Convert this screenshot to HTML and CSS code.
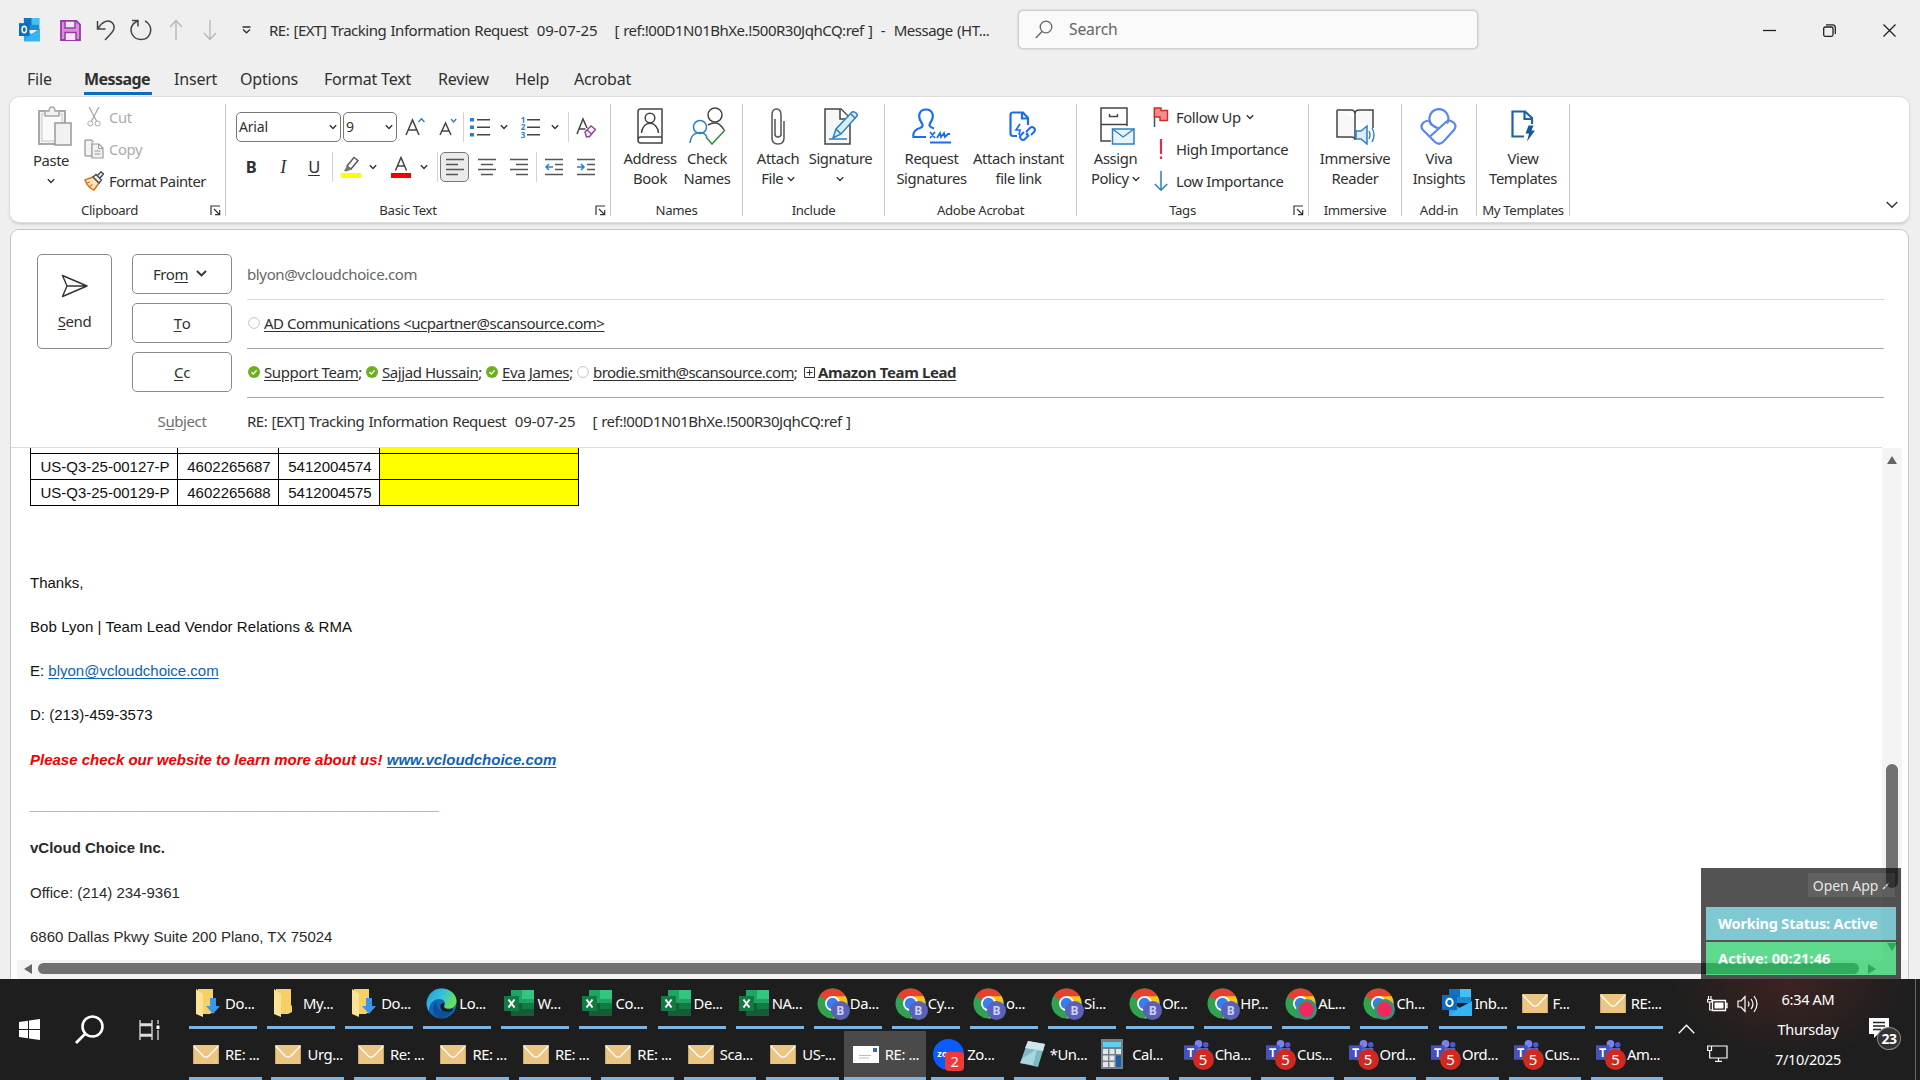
FILE: index.html
```html
<!DOCTYPE html>
<html lang="en">
<head>
<meta charset="utf-8">
<title>Message</title>
<link rel="stylesheet" href="styles.css">
</head>
<body>
<svg class="defs" width="0" height="0">
  <symbol id="chev" viewBox="0 0 8 6"><path d="M.8 1.2 4 4.4 7.200 1.200" fill="none" stroke="#333" stroke-width="1.4"/></symbol>
  <symbol id="launch" viewBox="0 0 11 11"><path d="M1 10V1h9M4 4l5.500 5.500M9.700 5v4.700H5" fill="none" stroke="#333" stroke-width="1.200"/></symbol>
  <symbol id="ok" viewBox="0 0 12 12"><circle cx="6" cy="6" r="6" fill="#6bb020"/><path d="M3.500 6.200 5.300 8 8.600 4.400" fill="none" stroke="#fff" stroke-width="1.300"/></symbol>
  <symbol id="unk" viewBox="0 0 12 12"><circle cx="6" cy="6" r="5.400" fill="#fff" stroke="#c2c6c6"/></symbol>
  <symbol id="mail" viewBox="0 0 27 20"><path d="M0 0h27v20H0z" fill="#ecc583"/><path d="M.5 1 10.500 11.500Q13.500 14 16.500 11.500L26.500 1" fill="none" stroke="#fff" stroke-width="1.400"/></symbol>
  <symbol id="folder" viewBox="0 0 26 28"><path d="M4 0h15v16l1 1v6l-4 2H4z" fill="#f6cf66"/><path d="M2 0 9 5v23L2 25z" fill="#ffe394"/></symbol>
  <symbol id="folderd" viewBox="0 0 26 28"><path d="M4 0h15v23l-3 2H4z" fill="#f6cf66"/><path d="M2 0 9 5v23L2 25z" fill="#ffe394"/><path d="M16 9h6v8h4l-7 8-7-8h4z" fill="#3a96e8"/></symbol>
  <symbol id="edge" viewBox="0 0 32 32"><defs><linearGradient id="eg" x1="0" y1="0" x2="1" y2=".5"><stop offset="0" stop-color="#2497dc"/><stop offset=".55" stop-color="#35c5d8"/><stop offset="1" stop-color="#6fe04f"/></linearGradient></defs><circle cx="16" cy="16" r="15.500" fill="#1267b8"/><path d="M1 13C3 5 9 .5 16 .5c9 0 15.500 6 15.500 13 0 5-4 8-8.500 8-4 0-5-2-4-3.500 1-1.500 1-6-4-6.500C8 11 3 16 3 24 .5 20 .3 16 1 13z" fill="url(#eg)"/><path d="M12 13c-3 8 4 14 15 11-4 6-10 8-15 6.500-6-3-7-13 0-17.500z" fill="#0c4f9a"/><path d="M19 17c-2 4 4 6 9 4l-1 3c-8 2-13-1-12-6 1-3 4-3 4-1z" fill="#1e1e1e"/></symbol>
  <symbol id="excel" viewBox="0 0 30 28"><path d="M7 1h23v26H7z" fill="#21a366"/><path d="M18 1h12v9H18z" fill="#33c481"/><path d="M7 14h11v13H7z" fill="#185c37"/><path d="M18 14h12v6H18z" fill="#107c41"/><path d="M18 20h12v7H18z" fill="#185c37"/><path d="M0 7h15v15H0z" fill="#107c41"/><path d="m4.500 10.500 6 8m0-8-6 8" stroke="#fff" stroke-width="2"/></symbol>
  <symbol id="chrome" viewBox="0 0 32 32"><circle cx="16" cy="16" r="15.500" fill="#31a350"/><path d="M16 16 2.600 8.200A15.500 15.500 0 0 1 29.400 8.200z" fill="#e8402f"/><path d="M16 8.500H29.600A15.500 15.500 0 0 1 16 31.500l6.500-11z" fill="#fbc116"/><circle cx="16" cy="16" r="7.700" fill="#fff"/><circle cx="16" cy="16" r="6" fill="#3a7df0"/></symbol>
  <symbol id="outlook" viewBox="0 0 30 28"><path d="M7 0h22v14H7z" fill="#1c8ad8"/><path d="M7 0h11v8H7z" fill="#1272c0"/><path d="M18 0h11v8H18z" fill="#43c1f5"/><path d="M7 12 18 19 30 12v15H7z" fill="#2aa5e8"/><path d="m7 27 12-9 11-5v14z" fill="#35b3f2"/><path d="M0 6h15v15H0z" fill="#0a6cc4"/><ellipse cx="7.500" cy="13.500" rx="3.200" ry="3.700" fill="none" stroke="#fff" stroke-width="2"/></symbol>
  <symbol id="teams" viewBox="0 0 32 30"><circle cx="16" cy="4.500" r="4" fill="#7b83eb"/><circle cx="23.500" cy="5.500" r="2.800" fill="#5059c9"/><path d="M9 9h17v12H9z" fill="#6a72dc"/><path d="M1 6h14v15H1z" fill="#4651bd"/><path d="M4.500 10h7M8 10v8" stroke="#fff" stroke-width="1.900"/></symbol>
</svg>

<header class="titlebar">
  <div class="quick">
    <svg class="q-out" width="21" height="24" viewBox="0 0 30 28" preserveAspectRatio="none"><use href="#outlook"/></svg>
    <svg class="q-save" width="21" height="21" viewBox="0 0 21 21"><path d="M1 1h15.500L20 4.500V20H1z" fill="#d78fdc" stroke="#9b3aa5" stroke-width="1.800"/><path d="M5 1h10v7H5zM5 20v-7.500h11V20" fill="#f3e6f4" stroke="#9b3aa5" stroke-width="1.500"/></svg>
    <svg class="q-undo" width="20" height="22" viewBox="0 0 20 22"><path d="M1.500 2v8h8M2 9.500C6 3 12-.5 16.500 4 20.500 9 17 13 9 21" fill="none" stroke="#444" stroke-width="1.500"/></svg>
    <svg class="q-redo" width="22" height="22" viewBox="0 0 22 22"><path d="M2 1.500h6v6M7.500 2C2 4.500-.5 9.500 2 15c4 7.500 15 7.500 18-.5C22 9 19.500 4 15 2" fill="none" stroke="#444" stroke-width="1.500"/></svg>
    <svg class="q-up" width="14" height="22" viewBox="0 0 14 22"><path d="M7 21V2M1 8l6-6.500L13 8" fill="none" stroke="#b8b8b8" stroke-width="1.400"/></svg>
    <svg class="q-down" width="14" height="22" viewBox="0 0 14 22"><path d="M7 1v19M1 14l6 6.500 6-6.500" fill="none" stroke="#b8b8b8" stroke-width="1.400"/></svg>
    <svg class="q-more" width="9" height="8" viewBox="0 0 9 8"><path d="M.5 1h8M1 3.500l3.500 3.300L8 3.500" fill="none" stroke="#333" stroke-width="1.300"/></svg>
  </div>
  <div class="title">RE: [EXT] Tracking Information Request  <span class="date">09-07-25</span>    [ ref:!00D1N01BhXe.!500R30JqhCQ:ref ]  -  Message (HT...</div>
  <div class="search">
    <svg width="18" height="19" viewBox="0 0 18 19"><circle cx="11" cy="7" r="5.800" fill="none" stroke="#666" stroke-width="1.300"/><path d="M7 11.500.8 18" stroke="#666" stroke-width="1.400"/></svg>
    <span>Search</span>
  </div>
  <div class="winbtns">
    <svg width="13" height="13" viewBox="0 0 13 13"><path d="M0 6.500h13" stroke="#222" stroke-width="1.300"/></svg>
    <svg width="13" height="13" viewBox="0 0 13 13"><rect x=".7" y="3" width="9.300" height="9.300" rx="1.500" fill="none" stroke="#222" stroke-width="1.300"/><path d="M3 .8h6.500Q12.300.8 12.300 3.500V10" fill="none" stroke="#222" stroke-width="1.300"/></svg>
    <svg width="13" height="13" viewBox="0 0 13 13"><path d="m.5.5 12 12m0-12-12 12" stroke="#222" stroke-width="1.300"/></svg>
  </div>
</header>

<nav class="tabs">
  <span class="t-file">File</span><span class="t-msg on">Message</span><span class="t-ins">Insert</span><span class="t-opt">Options</span><span class="t-fmt">Format Text</span><span class="t-rev">Review</span><span class="t-help">Help</span><span class="t-acro">Acrobat</span>
</nav>

<section class="ribbon">
  <div class="group g1">
    <div class="content">
      <div class="big paste">
        <i><svg width="36" height="40" viewBox="0 0 36 40"><path d="M2 5h26v33H2z" fill="#f1f1f1" stroke="#a8a8a8" stroke-width="2"/><path d="M5 8h20v27H5z" fill="#fafafa" stroke="#c9c9c9"/><path d="M8 10V5h4q0-4 3-4t3 4h4v5z" fill="#f1f1f1" stroke="#a8a8a8" stroke-width="1.500"/><path d="M18 17h16v22H18z" fill="#f1f1f1" stroke="#999" stroke-width="1.500"/></svg></i>
        <span>Paste<br><svg class="chev"><use href="#chev"/></svg></span>
      </div>
      <div class="rows">
        <div class="off"><i><svg width="14" height="20" viewBox="0 0 14 20"><path d="m2 0 7.500 14M12 0 4.500 14" stroke="#a8a8a8" stroke-width="1.300"/><circle cx="3.300" cy="16.500" r="2.500" fill="none" stroke="#a8a8a8"/><circle cx="10.700" cy="16.500" r="2.500" fill="none" stroke="#a8a8a8"/></svg></i>Cut</div>
        <div class="off"><i><svg width="20" height="20" viewBox="0 0 20 20"><path d="M7 17H1V1h7l2 2M1 1h7v16H1z" fill="#f3f3f3" stroke="#a8a8a8"/><path d="M8 5h7l4 4v10H8z" fill="#f3f3f3" stroke="#999" stroke-width="1.200"/><path d="M14.500 5v4.500H19M10.500 12h6M10.500 15h6" fill="none" stroke="#999"/></svg></i>Copy</div>
        <div class="fp"><i><svg width="20" height="20" viewBox="0 0 20 20"><path d="M1 9 9 6l6 6-5 7q-6-2-9-10z" fill="#fde3c4" stroke="#e0761c" stroke-width="1.600"/><path d="m3 12 3-1M5.500 15.500l3-2" stroke="#e0761c" stroke-width="1.300"/><path d="m9 6 3-2.500 5.500 5.500L15 12zM13.500 4.500 17 .8 19.500 3l-3.500 4" fill="#eee" stroke="#444" stroke-width="1.300"/></svg></i>Format Painter</div>
      </div>
    </div>
    <div class="label"><span>Clipboard</span><svg class="launch"><use href="#launch"/></svg></div>
  </div>

  <div class="group g2">
    <div class="content">
      <div class="frow">
        <div class="combo w104">Arial<svg class="chev"><use href="#chev"/></svg></div>
        <div class="combo w54">9<svg class="chev"><use href="#chev"/></svg></div>
        <i class="c36"><svg width="20" height="20" viewBox="0 0 20 20"><path d="M1 18 7.500 3 14 18M3.500 13h8" fill="none" stroke="#444" stroke-width="1.500"/><path d="m13.500 5 3-3.300 3 3.300" fill="none" stroke="#2b7fc4" stroke-width="1.400"/></svg></i>
        <i class="c30"><svg width="18" height="20" viewBox="0 0 18 20"><path d="M1 18 6.500 6 12 18M3 14h7" fill="none" stroke="#444" stroke-width="1.500"/><path d="m12 2 2.600 3 2.600-3" fill="none" stroke="#2b7fc4" stroke-width="1.400"/></svg></i>
        <b class="sep"></b>
        <i class="c32"><svg width="20" height="20" viewBox="0 0 20 20"><path d="M0 1h4v3.500H0zM0 8.500h4V12H0zM0 16h4v3.500H0z" fill="#2b7fc4"/><path d="M7 2.800h13M7 10.300h13M7 17.800h13" stroke="#444" stroke-width="1.500"/></svg></i>
        <i class="c16"><svg class="chev"><use href="#chev"/></svg></i>
        <i class="c38 nums"><em>1<br>2<br>3</em><svg width="14" height="20" viewBox="0 0 14 20"><path d="M0 2.800h13M0 10.300h13M0 17.800h13" stroke="#444" stroke-width="1.500"/></svg></i>
        <i class="c10"><svg class="chev"><use href="#chev"/></svg></i>
        <b class="sep ml8"></b>
        <i class="c34"><svg width="20" height="21" viewBox="0 0 20 21"><path d="M1 17 7 2l4 9M3.500 12h6" fill="none" stroke="#444" stroke-width="1.500"/><path d="m9 15 6-6 4.500 3.500-6 7-3 .5z" fill="#fff" stroke="#9b3aa5" stroke-width="1.500"/><path d="m11 13 4.500 4" stroke="#9b3aa5" stroke-width="1.500"/></svg></i>
      </div>
      <div class="frow">
        <i class="c30 fb">B</i><i class="c34 fi">I</i><i class="c28 fu">U</i>
        <b class="sep ml4"></b>
        <i class="c36"><svg width="20" height="22" viewBox="0 0 20 22"><path d="M6 10 13 1.500l4 3L10 13z" fill="#fff" stroke="#555" stroke-width="1.400"/><path d="m6 9.500-3 5.500 2 .5 6-2z" fill="#777"/><path d="M0 17h20v5H0z" fill="#fdfd00"/></svg></i>
        <i class="c8"><svg class="chev"><use href="#chev"/></svg></i>
        <i class="c30 ml9"><svg width="20" height="22" viewBox="0 0 20 22"><path d="M4.500 14.500 10 1.500l5.500 13M6.500 10h7" fill="none" stroke="#444" stroke-width="1.500"/><path d="M0 17h20v5H0z" fill="#f30000"/></svg></i>
        <i class="c16"><svg class="chev"><use href="#chev"/></svg></i>
        <b class="sep ml5"></b>
        <i class="c29 pressed"><svg width="18" height="18" viewBox="0 0 18 18"><path d="M0 1.500h18M0 6.500h12M0 11.500h18M0 16.500h12" stroke="#555" stroke-width="1.500"/></svg></i>
        <i class="c36"><svg width="18" height="18" viewBox="0 0 18 18"><path d="M0 1.500h18M3 6.500h12M0 11.500h18M3 16.500h12" stroke="#555" stroke-width="1.500"/></svg></i>
        <i class="c28"><svg width="18" height="18" viewBox="0 0 18 18"><path d="M0 1.500h18M6 6.500h12M0 11.500h18M6 16.500h12" stroke="#555" stroke-width="1.500"/></svg></i>
        <b class="sep ml3"></b>
        <i class="c33"><svg width="18" height="18" viewBox="0 0 18 18"><path d="M0 1.500h18M10 6.500h8M10 11.500h8M0 16.500h18" stroke="#555" stroke-width="1.500"/><path d="M8 9H1.500M4 6 1 9l3 3" fill="none" stroke="#2b7fc4" stroke-width="1.500"/></svg></i>
        <i class="c32"><svg width="18" height="18" viewBox="0 0 18 18"><path d="M0 1.500h18M10 6.500h8M10 11.500h8M0 16.500h18" stroke="#555" stroke-width="1.500"/><path d="M0 9h6.500M4 6l3 3-3 3" fill="none" stroke="#2b7fc4" stroke-width="1.500"/></svg></i>
      </div>
    </div>
    <div class="label"><span>Basic Text</span><svg class="launch"><use href="#launch"/></svg></div>
  </div>

  <div class="group g3">
    <div class="content">
      <div class="big w56"><i><svg width="26" height="36" viewBox="0 0 26 36"><path d="M3.500 1H25v34H3.500Q1 35 1 32V4Q1 1 3.500 1zM1 32q0-3 3-3h21" fill="none" stroke="#444" stroke-width="1.500"/><circle cx="13" cy="10" r="4.800" fill="none" stroke="#444" stroke-width="1.500"/><path d="M4.500 25c1-13 16-13 17 0" fill="none" stroke="#444" stroke-width="1.500"/></svg></i><span>Address<br>Book</span></div>
      <div class="big w58"><i><svg width="37" height="38" viewBox="0 0 37 38"><circle cx="26" cy="8" r="7" fill="none" stroke="#444" stroke-width="1.500"/><path d="M19 18q10-6 16 5" fill="none" stroke="#444" stroke-width="1.500"/><circle cx="11" cy="20" r="6.500" fill="none" stroke="#2b7fc4" stroke-width="1.500"/><path d="M1 36c1-12 13-13 17-6" fill="none" stroke="#2b7fc4" stroke-width="1.500"/><path d="m17 30 6 7L36 23" fill="none" stroke="#2c8c46" stroke-width="1.500"/></svg></i><span>Check<br>Names</span></div>
    </div>
    <div class="label"><span>Names</span></div>
  </div>

  <div class="group g4">
    <div class="content">
      <div class="big w60"><i><svg width="14" height="37" viewBox="0 0 14 37"><path d="M10 8v18q0 3-3 3t-3-3V11M13 13v17q0 6-6 6t-6-6V7q0-6 4.500-6T10 7v3" fill="none" stroke="#555" stroke-width="1.500"/></svg></i><span>Attach<br>File <svg class="chev"><use href="#chev"/></svg></span></div>
      <div class="big w65"><i><svg width="34" height="37" viewBox="0 0 34 37"><path d="M1 1h16l9 9v26H1z" fill="#f7f7f7" stroke="#444" stroke-width="1.500"/><path d="M16 1v10h10" fill="#fff" stroke="#444" stroke-width="1.500"/><path d="m9 30 3-9L28 4q2-1 4 1t1 3L17 26z" fill="#d9edfb" stroke="#2b7fc4" stroke-width="1.500"/><path d="m12 21 5 5M27 6l4.500 4.500M5 31h18" stroke="#2b7fc4" stroke-width="1.500"/></svg></i><span>Signature<br><svg class="chev"><use href="#chev"/></svg></span></div>
    </div>
    <div class="label"><span>Include</span></div>
  </div>

  <div class="group g5">
    <div class="content">
      <div class="big w83"><i><svg width="39" height="36" viewBox="0 0 39 36"><path d="M14 29H1.500c-1-5 3-8 6.500-9 3-1 3-3 2-4.500C5 9 7 1.500 14 1.500S23 9 18 15.500c-1 2-1 3 4 5" fill="none" stroke="#1a6fe8" stroke-width="2.200"/><path d="m18 24 5 6m0-6-5 6M25 30l3-5 1 4 3-4 1 4 3-3h2M18 34.500h21" fill="none" stroke="#1a6fe8" stroke-width="1.800"/></svg></i><span>Request<br>Signatures</span></div>
      <div class="big w91 inst"><i><svg width="27" height="31" viewBox="0 0 27 31"><path d="M8 25H4Q1.500 25 1.500 22V4Q1.500 1.500 4 1.500h10L19 7v7M13 1.500V7.500h6" fill="none" stroke="#1a6fe8" stroke-width="2.200"/><path d="m11 13-4 6h4l-1 5" fill="none" stroke="#1a6fe8" stroke-width="1.700"/><path d="m17 21 4-4q2-2 4 0t0 4l-3 3M19 22l-2 2M20 24l-4 4q-2 2-4 0t0-4l3-3" fill="none" stroke="#1a6fe8" stroke-width="2"/></svg></i><span>Attach instant<br>file link</span></div>
    </div>
    <div class="label"><span>Adobe Acrobat</span></div>
  </div>

  <div class="group g6">
    <div class="content">
      <div class="big w63 assign"><i><svg width="35" height="38" viewBox="0 0 35 38"><path d="M11 34H1V1h26v18M1 17.500h26" fill="none" stroke="#444" stroke-width="1.500"/><path d="M9.500 7v2.500h8V7" fill="none" stroke="#444" stroke-width="1.400"/><path d="M12.500 22H34v15H12.500z" fill="#e8f4fc" stroke="#2b7fc4" stroke-width="1.500"/><path d="m12.500 22 10.700 8L34 22" fill="none" stroke="#2b7fc4" stroke-width="1.400"/></svg></i><span>Assign<br>Policy <svg class="chev"><use href="#chev"/></svg></span></div>
      <div class="rows">
        <div><i><svg width="16" height="20" viewBox="0 0 16 20"><path d="M1.500 1v19" stroke="#39566b" stroke-width="1.500"/><path d="M1.500 1H8v2.500h6.500v10H7V10H1.500z" fill="#f58c8c" stroke="#cf2a2a" stroke-width="1.400"/></svg></i>Follow Up <svg class="chev fl"><use href="#chev"/></svg></div>
        <div><i><svg width="4" height="20" viewBox="0 0 4 20"><path d="M2 0v15M2 17.500V20" stroke="#d9304c" stroke-width="2.200"/></svg></i>High Importance</div>
        <div><i><svg width="14" height="20" viewBox="0 0 14 20"><path d="M7 0v19M.8 13 7 19.200 13.200 13" fill="none" stroke="#2b7fc4" stroke-width="1.500"/></svg></i>Low Importance</div>
      </div>
    </div>
    <div class="label"><span>Tags</span><svg class="launch"><use href="#launch"/></svg></div>
  </div>

  <div class="group g7">
    <div class="content mid">
      <div class="big"><i><svg width="39" height="37" viewBox="0 0 39 37"><path d="M1 2h14q4 0 4 4 0-4 4-4h14v18M1 2v27h14q4 0 4 3V6" fill="#f8f8f8" stroke="#444" stroke-width="1.500"/><path d="M20 23h5l6-5v18l-6-5h-5z" fill="#dcedfa" stroke="#2b7fc4" stroke-width="1.500"/><path d="M33 23q2 4 0 8M36 20q4 7 0 14" fill="none" stroke="#2b7fc4" stroke-width="1.400"/></svg></i><span>Immersive<br>Reader</span></div>
    </div>
    <div class="label"><span>Immersive</span></div>
  </div>
  <div class="group g8">
    <div class="content mid">
      <div class="big"><i><svg width="37" height="37" viewBox="0 0 37 37"><g fill="none" stroke="#5a86f2" stroke-width="2.200"><path d="M11.500 16.500A9.500 9.500 0 1 1 27 15.500"/><path d="M10 13q-4-1-7 2-3 4 0 7l12 12q4 3.500 8 0l11-12q3-4 0-7-4-4-8-1L10 28.500M9.500 13Q10 17 18.500 20.500"/></g></svg></i><span>Viva<br>Insights</span></div>
    </div>
    <div class="label"><span>Add-in</span></div>
  </div>
  <div class="group g9">
    <div class="content mid">
      <div class="big"><i><svg width="24" height="32" viewBox="0 0 24 32"><path d="M13 26.500H1.500v-25H14L21 8v6M13.500 1.500V9H21" fill="none" stroke="#1c64a8" stroke-width="2.200"/><path d="M17.500 15.500h5l-2 5H24l-8 11 2-8h-3.500z" fill="#15599c"/></svg></i><span>View<br>Templates</span></div>
    </div>
    <div class="label"><span>My Templates</span></div>
  </div>
  <svg class="collapse" width="12" height="8" viewBox="0 0 12 8"><path d="m.7 1 5.300 5.300L11.300 1" fill="none" stroke="#333" stroke-width="1.400"/></svg>
</section>

<main class="pane">
  <div class="head">
    <div class="send"><svg width="27" height="24" viewBox="0 0 27 24"><path d="M1.500 1.500 26 12 1.500 22.500 6 12zM6 12h19" fill="none" stroke="#333" stroke-width="1.400" stroke-linejoin="round"/></svg><span><u>S</u>end</span></div>
    <div class="fields">
      <div class="fld"><div class="btn from">Fro<u>m</u><svg width="11" height="7" viewBox="0 0 11 7"><path d="m1 1 4.500 4.500L10 1" fill="none" stroke="#333" stroke-width="1.800"/></svg></div><div class="val lite grey">blyon@vcloudchoice.com</div></div>
      <div class="fld"><div class="btn"><u>T</u>o</div><div class="val"><svg class="pr"><use href="#unk"/></svg><u class="n-ad">AD Communications &lt;ucpartner@scansource.com&gt;</u></div></div>
      <div class="fld"><div class="btn"><u>C</u>c</div><div class="val">
        <div class="who p1"><svg class="pr"><use href="#ok"/></svg><u>Support Team</u>;</div>
        <div class="who p2"><svg class="pr"><use href="#ok"/></svg><u>Sajjad Hussain</u>;</div>
        <div class="who p3"><svg class="pr"><use href="#ok"/></svg><u>Eva James</u>;</div>
        <div class="who p4"><svg class="pr"><use href="#unk"/></svg><u>brodie.smith@scansource.com</u>;</div>
        <div class="who p5"><svg width="11" height="11" viewBox="0 0 11 11"><path d="M.5.5h10v10H.5zM2.500 5.500h6M5.500 2.500v6" fill="none" stroke="#333"/></svg><u>Amazon Team Lead</u></div>
      </div></div>
      <div class="fld last"><div class="cap">S<u>u</u>bject</div><div class="val subj">RE: [EXT] Tracking Information Request  <span class="date">09-07-25</span>    [ ref:!00D1N01BhXe.!500R30JqhCQ:ref ]</div></div>
    </div>
  </div>
  <div class="body">
    <div class="doc">
      <table>
        <tr><td class="k1"></td><td class="k2"></td><td class="k2"></td><td class="k3"></td></tr>
        <tr><td>US-Q3-25-00127-P</td><td>4602265687</td><td>5412004574</td><td class="k3"></td></tr>
        <tr><td>US-Q3-25-00129-P</td><td>4602265688</td><td>5412004575</td><td class="k3"></td></tr>
      </table>
      <p>Thanks,</p>
      <p class="sig">Bob Lyon | Team Lead Vendor Relations &amp; RMA</p>
      <p>E: <a>blyon@vcloudchoice.com</a></p>
      <p>D: (213)-459-3573</p>
      <p class="promo">Please check our website to learn more about us! <a>www.vcloudchoice.com</a></p>
      <p class="rule">_________________________________________________</p>
      <p class="dim"><b>vCloud Choice Inc.</b></p>
      <p class="dim">Office: (214) 234-9361</p>
      <p class="dim">6860 Dallas Pkwy Suite 200 Plano, TX 75024</p>
    </div>
    <div class="vbar">
      <svg width="10" height="8" viewBox="0 0 10 8"><path d="M5 0 10 8H0z" fill="#666"/></svg>
      <div class="vthumb"></div>
      <svg width="10" height="8" viewBox="0 0 10 8"><path d="M5 8 10 0H0z" fill="#666"/></svg>
    </div>
  </div>
  <div class="hbar">
    <svg width="8" height="10" viewBox="0 0 8 10"><path d="M0 5 8 0v10z" fill="#666"/></svg>
    <div class="hthumb"></div>
    <svg width="8" height="10" viewBox="0 0 8 10"><path d="M8 5 0 0v10z" fill="#666"/></svg>
  </div>
</main>

<aside class="widget">
  <div class="open">Open App <svg width="8" height="8" viewBox="0 0 8 8"><path d="M1 7 7 1" stroke="#ddd" stroke-width="1.500" stroke-dasharray="3 1"/></svg></div>
  <div class="ws">Working Status: Active</div>
  <div class="ac">Active: 00:21:46</div>
</aside>

<footer class="taskbar">
  <div class="sys">
    <svg width="21" height="21" viewBox="0 0 21 21"><path d="M0 3 9 1.700v8.300H0zM10 1.500 21 0v10H10zM0 11h9v8.300L0 18zM10 11h11v10l-11-1.500z" fill="#fff"/></svg>
    <svg width="29" height="29" viewBox="0 0 29 29"><circle cx="17.500" cy="11.500" r="10" fill="none" stroke="#fff" stroke-width="2.600"/><path d="M10.500 18.500 1 28" stroke="#fff" stroke-width="2.800"/></svg>
    <svg width="21" height="20" viewBox="0 0 21 20"><path d="M1 0v4h12V0M1 20v-4h12v4M1 5.500h12v9H1zM19 0v4M19 10v10" fill="none" stroke="#ddd" stroke-width="1.300"/><path d="M17.500 5.500h3v3.500h-3z" fill="#fff"/></svg>
  </div>
  <div class="tasks">
    <div class="trow r1">
      <div><i><svg width="26" height="28"><use href="#folderd"/></svg></i>Do...</div>
      <div><i><svg width="26" height="28"><use href="#folder"/></svg></i>My...</div>
      <div><i><svg width="26" height="28"><use href="#folderd"/></svg></i>Do...</div>
      <div><i><svg width="31" height="31"><use href="#edge"/></svg></i>Lo...</div>
      <div><i><svg width="30" height="28"><use href="#excel"/></svg></i>W...</div>
      <div><i><svg width="30" height="28"><use href="#excel"/></svg></i>Co...</div>
      <div><i><svg width="30" height="28"><use href="#excel"/></svg></i>De...</div>
      <div><i><svg width="30" height="28"><use href="#excel"/></svg></i>NA...</div>
      <div><i><svg width="31" height="31"><use href="#chrome"/></svg><b class="pb">B</b></i>Da...</div>
      <div><i><svg width="31" height="31"><use href="#chrome"/></svg><b class="pb">B</b></i>Cy...</div>
      <div><i><svg width="31" height="31"><use href="#chrome"/></svg><b class="pb">B</b></i>o...</div>
      <div><i><svg width="31" height="31"><use href="#chrome"/></svg><b class="pb">B</b></i>Si...</div>
      <div><i><svg width="31" height="31"><use href="#chrome"/></svg><b class="pb">B</b></i>Or...</div>
      <div><i><svg width="31" height="31"><use href="#chrome"/></svg><b class="pb">B</b></i>HP...</div>
      <div><i><svg width="31" height="31"><use href="#chrome"/></svg><b class="pr2"></b></i>AL...</div>
      <div><i><svg width="31" height="31"><use href="#chrome"/></svg><b class="pr2"></b></i>Ch...</div>
      <div><i><svg width="30" height="28"><use href="#outlook"/></svg></i>Inb...</div>
      <div><i><svg width="26" height="19"><use href="#mail"/></svg></i>F...</div>
      <div><i><svg width="26" height="19"><use href="#mail"/></svg></i>RE:...</div>
    </div>
    <div class="trow r2">
      <div><i><svg width="26" height="19"><use href="#mail"/></svg></i>RE: ...</div>
      <div><i><svg width="26" height="19"><use href="#mail"/></svg></i>Urg...</div>
      <div><i><svg width="26" height="19"><use href="#mail"/></svg></i>Re: ...</div>
      <div><i><svg width="26" height="19"><use href="#mail"/></svg></i>RE: ...</div>
      <div><i><svg width="26" height="19"><use href="#mail"/></svg></i>RE: ...</div>
      <div><i><svg width="26" height="19"><use href="#mail"/></svg></i>RE: ...</div>
      <div><i><svg width="26" height="19"><use href="#mail"/></svg></i>Sca...</div>
      <div><i><svg width="26" height="19"><use href="#mail"/></svg></i>US-...</div>
      <div class="cur"><i><svg width="26" height="17" viewBox="0 0 26 17"><path d="M0 0h26v17H0z" fill="#fff"/><path d="M20 2h4v4h-4z" fill="#3767b5"/><path d="M6 9.500h12M6 12h10" stroke="#bbb"/></svg></i>RE: ...</div>
      <div class="zoom"><i><svg width="31" height="31" viewBox="0 0 31 31"><circle cx="15.500" cy="15.500" r="15.500" fill="#0b5cff"/></svg><b class="zt">zo</b><b class="zb">2</b></i>Zo...</div>
      <div><i><svg width="28" height="28" viewBox="0 0 28 28"><path d="M10 1 27 4 20 27 2 23z" fill="#7fb9c4"/><path d="M10 1 27 4l-2 7L7 8z" fill="#cfe6ea"/><path d="M5 18 19 9l-4 16L2 23z" fill="#a9d6dc"/></svg></i>*Un...</div>
      <div><i><svg width="24" height="30" viewBox="0 0 24 30"><path d="M1 0h22v30H1z" fill="#76808a"/><path d="M3 3h18v5H3z" fill="#5fd0f4"/><path d="M3 10h5v5H3zM9.500 10h5v5h-5zM16 10h5v5h-5zM3 16.500h5v5H3zM9.500 16.500h5v5h-5zM3 23h5v5H3zM9.500 23h5v5h-5z" fill="#e4e7ea"/><path d="M16 16.500h5V28h-5z" fill="#1e5fa8"/></svg></i>Cal...</div>
      <div><i><svg width="31" height="30"><use href="#teams"/></svg><b class="tb">5</b></i>Cha...</div>
      <div><i><svg width="31" height="30"><use href="#teams"/></svg><b class="tb">5</b></i>Cus...</div>
      <div><i><svg width="31" height="30"><use href="#teams"/></svg><b class="tb">5</b></i>Ord...</div>
      <div><i><svg width="31" height="30"><use href="#teams"/></svg><b class="tb">5</b></i>Ord...</div>
      <div><i><svg width="31" height="30"><use href="#teams"/></svg><b class="tb">5</b></i>Cus...</div>
      <div><i><svg width="31" height="30"><use href="#teams"/></svg><b class="tb">5</b></i>Am...</div>
    </div>
  </div>
  <svg class="more" width="17" height="10" viewBox="0 0 17 10"><path d="m.8 9.200 7.700-8 7.700 8" fill="none" stroke="#fff" stroke-width="1.400"/></svg>
  <div class="tray">
    <div>
      <svg width="21" height="16" viewBox="0 0 21 16"><path d="M5.500 4.500h13v10h-13zM18.500 7.500h1.500v4h-1.500" fill="none" stroke="#fff" stroke-width="1.300"/><path d="M7.500 6.500h9v6h-9z" fill="#fff"/><path d="M1.500 0v3M4 0v3M.5 3.500h4.500V6H.5zM2.700 6v8h3" fill="none" stroke="#fff" stroke-width="1.200"/></svg>
      <svg width="21" height="20" viewBox="0 0 21 20"><path d="M1 7h3l4-4.500v15L4 13H1zM11 7.500q2 2.500 0 5M14 5q4 5 0 10M17 2q6 8 0 16" fill="none" stroke="#fff" stroke-width="1.200"/></svg>
    </div>
    <svg width="21" height="17" viewBox="0 0 21 17"><path d="M5 1h15v12H2.700V6M8 16.300h7M11.500 13v3M.7 1H4.500v4.500H.7z" fill="none" stroke="#fff" stroke-width="1.200"/></svg>
  </div>
  <div class="clock">6:34 AM<br>Thursday<br>7/10/2025</div>
  <div class="note"><svg width="20" height="20" viewBox="0 0 20 20"><path d="M0 0h20v16H9l-4 4v-4H0z" fill="#fff"/><path d="M4 4.500h12M4 8h12M4 11.500h8" stroke="#222" stroke-width="1.400"/></svg><b>23</b></div>
  <div class="peek"></div>
</footer>
</body>
</html>
```
FILE: styles.css
```css
* { box-sizing: border-box; }
body {
  margin: 0; width: 1920px; height: 1080px; overflow: hidden; position: relative;
  display: flex; flex-direction: column; background: #efefef; color: #303030;
  font: 14.8px/20px "Noto Sans", "Open Sans", sans-serif; letter-spacing: -.4px;
}
.defs { position: absolute; }
i, em { font-style: normal; }
svg { flex: none; display: block; }
.chev { width: 8px; height: 6px; display: inline-block; vertical-align: 2px; }
.launch { width: 11px; height: 11px; }

/* title bar */
.titlebar { height: 60px; display: flex; align-items: center; flex: none; }
.quick { width: 269px; display: flex; align-items: center; flex: none; padding-left: 19px; }
.q-save { margin-left: 20px; }
.q-undo { margin-left: 15px; }
.q-redo { margin-left: 14px; }
.q-up { margin-left: 17px; }
.q-down { margin-left: 20px; }
.q-more { margin-left: 25px; }
.title { width: 749px; white-space: pre; font-size: 15px; letter-spacing: -.48px; word-spacing: .8px; }
.date { letter-spacing: -.03px; }
.search {
  width: 460px; height: 39px; margin-top: -1px; padding: 0 0 1px 16px; display: flex; align-items: center; gap: 16px;
  background: #fafafa; border: 1px solid #cfcfcf; border-radius: 5px; color: #666; box-shadow: 0 0 2px #bbb;
  font-size: 15.700px; letter-spacing: -.2px;
}
.winbtns { flex: 1; display: flex; gap: 47px; padding-left: 285px; }

/* tabs */
.tabs { height: 37px; flex: none; display: flex; font-size: 16px; line-height: 39px; padding-left: 27px; letter-spacing: -.2px; }
.tabs span { height: 35px; white-space: nowrap; }
.t-file { width: 57px; }
.t-msg { width: 68px; margin-right: 22px; }
.t-ins { width: 66px; }
.t-opt { width: 84px; }
.t-fmt { width: 114px; }
.t-rev { width: 77px; }
.t-help { width: 59px; }
.tabs .on { font-weight: 700; border-bottom: 3px solid #0f6cbd; letter-spacing: -.55px; }

/* ribbon */
.ribbon {
  height: 125px; flex: none; margin: 0 11px 7px 10px; padding-top: 7px; display: flex; background: #fff;
  border-radius: 9px; box-shadow: 0 0 0 1px #dcdcdc, 0 2px 3px #c4c4c4;
}
.group { height: 112px; border-right: 1px solid #c9c9c9; display: flex; flex-direction: column; }
.content { height: 100px; display: flex; }
.mid { justify-content: center; }
.label { height: 12px; line-height: 14px; display: flex; align-items: center; font-size: 13.2px; letter-spacing: -.35px; white-space: nowrap; }
.label span { flex: 1; text-align: center; }
.label .launch { margin-right: 4px; margin-left: 5px; }
.g1 { width: 216px; } .g1 .content { padding-left: 11px; }
.g1 .label { padding-left: 4px; }
.g2 { width: 385px; } .g2 .content { padding: 8px 0 0 10px; flex-direction: column; gap: 10px; justify-content: flex-start; }
.g3 { width: 132px; } .g3 .content { padding-left: 11px; }
.g4 { width: 142px; } .g4 .content { padding-left: 5px; }
.g5 { width: 192px; } .g5 .content { padding-left: 5px; }
.g6 { width: 232px; } .g6 .content { padding-left: 7px; }
.g7 { width: 93px; }
.g8 { width: 75px; }
.g9 { width: 93px; }
.big { display: flex; flex-direction: column; align-items: center; text-align: center; white-space: nowrap; }
.big i { height: 44px; display: flex; align-items: center; }
.paste { width: 63px; padding-right: 3px; }
.paste i { padding-left: 7px; }
.paste span { padding-top: 2px; }
.inst i { padding-left: 7px; }
.assign i { padding-left: 4px; }
.w56 { width: 56px; } .w58 { width: 58px; } .w60 { width: 60px; } .w65 { width: 65px; }
.w83 { width: 83px; } .w91 { width: 91px; } .w63 { width: 63px; }
.rows { margin-top: -3px; line-height: 32px; white-space: nowrap; }
.rows div { height: 32px; display: flex; align-items: center; }
.rows i { width: 20px; margin-right: 5px; display: flex; justify-content: center; }
.g6 .rows { padding-left: 3px; }
.g6 .rows i { width: 22px; margin-right: 4px; }
.fp { letter-spacing: -.52px; }
.fl { margin-left: 5px; }
.off { color: #ababab; }
.frow { height: 30px; display: flex; }
.frow i { display: flex; align-items: center; justify-content: center; flex: none; }
.combo { height: 30px; border: 1px solid #777; border-radius: 5px; padding: 0 3px 0 2px; display: flex; align-items: center; justify-content: space-between; font-size: 14px; letter-spacing: -.2px; }
.w104 { width: 105px; margin-right: 2px; } .w54 { width: 54px; }
.sep { width: 1px; height: 30px; background: #d2d2d2; flex: none; }
.c8 { width: 8px; } .c10 { width: 10px; } .c16 { width: 16px; } .c28 { width: 28px; } .c29 { width: 29px; }
.c30 { width: 30px; } .c32 { width: 32px; } .c33 { width: 33px; } .c34 { width: 34px; } .c36 { width: 36px; } .c38 { width: 38px; }
.ml3 { margin-left: 3px; } .ml4 { margin-left: 4px; } .ml5 { margin-left: 5px; } .ml8 { margin-left: 8px; } .ml9 { margin-left: 9px; }
.nums em { font-size: 8px; line-height: 7.500px; font-weight: 700; color: #2b7fc4; margin-right: 2px; letter-spacing: 0; }
.fb { font-weight: 700; font-size: 16.500px; }
.frow .fi { font: italic 18px "Liberation Serif", serif; }
.fu { font-size: 16.500px; text-decoration: underline; text-underline-offset: 2px; }
.pressed { border: 1px solid #777; border-radius: 5px; background: #ebebeb; margin-left: 2px; }
.collapse { margin: 97px 11px 0 auto; }

/* message pane */
.pane { flex: 1; min-height: 0; margin: 0 11px 0 10px; background: #fff; border: 1px solid #c6c6c6; border-bottom: 0; border-radius: 9px 9px 0 0; display: flex; flex-direction: column; overflow: hidden; }
.head { height: 218px; flex: none; padding: 21px 0 0 26px; display: flex; border-bottom: 1px solid #dcdcdc; margin: 0 26px 0 0; }
.send { width: 75px; height: 95px; margin: 3px 20px 0 0; border: 1px solid #8a8a8a; border-radius: 5px; display: flex; flex-direction: column; align-items: center; padding-top: 19px; gap: 13px; font-size: 15px; flex: none; }
.fields { flex: 1; margin-right: -2px; font-size: 15px; }
.fld { height: 49px; display: flex; align-items: center; }
.btn, .cap { width: 100px; height: 40px; flex: none; display: flex; align-items: center; justify-content: center; margin: 0 15px 3px 0; white-space: pre; padding-bottom: 1px; }
.btn { border: 1px solid #8a8a8a; border-radius: 5px; }
.from { padding-right: 4px; }
.btn svg { margin-left: 8px; }
.cap { color: #6e6e6e; }
.val { flex: 1; height: 49px; padding-bottom: 2px; border-bottom: 1px solid #a6a6a6; display: flex; align-items: center; white-space: pre; letter-spacing: -.37px; }
.lite { border-color: #d8d8d8; }
.grey { color: #666; }
.last .val { border: 0; letter-spacing: -.48px; word-spacing: .8px; padding-bottom: 4px; }
.n-ad { letter-spacing: -.48px; }
u { text-underline-offset: 2px; }
.pr { width: 12px; height: 12px; margin: 0 4px 0 1px; }
.who { display: flex; align-items: center; flex: none; }
.p1 { width: 118px; } .p2 { width: 120px; letter-spacing: -.43px; } .p3 { width: 91px; } .p4 { width: 228px; letter-spacing: -.58px; }
.p5 { font-weight: 700; letter-spacing: -.38px; } .p5 svg { margin-right: 3px; }

.body { flex: 1; min-height: 0; display: flex; margin-right: 6px; overflow: hidden; }
.doc { flex: 1; padding-left: 19px; font: 15px "Liberation Sans", Arial, sans-serif; letter-spacing: 0; color: #111; }
.doc table { border-collapse: collapse; table-layout: fixed; width: 549px; margin: -21px 0 54.500px; }
.doc td { height: 26px; padding: 0 0 0 2px; border: 1px solid #000; text-align: center; }
.k1 { width: 147px; } .k2 { width: 101px; } .k3 { background: #ff0; }
.doc p { margin: 0; line-height: 44.300px; }
.doc .sig { letter-spacing: .07px; }
.doc a { color: #0f62b5; text-decoration: underline; text-underline-offset: 2px; }
.doc .promo { color: #f30000; font-weight: 700; font-style: italic; }
.doc .rule { color: #f0a878; }
.dim { color: #2a2a2a; }
.vbar { width: 20px; background: #f4f4f4; display: flex; flex-direction: column; align-items: center; padding: 8px 0 9px; }
.vthumb { width: 12px; height: 124px; margin: 300px 0 auto; border-radius: 6px; background: #717171; }
.hbar { height: 19px; flex: none; background: #f4f4f4; display: flex; align-items: center; padding: 0 0 2px 7px; margin-left: 6px; }
.hthumb { height: 11px; width: 1821px; margin: 0 9px 0 6px; border-radius: 6px; background: #717171; }

/* time tracker overlay */
.widget { position: absolute; left: 1701px; top: 868px; width: 200px; height: 111px; padding: 5px; background: #000; opacity: .67; display: flex; flex-direction: column; color: #fff; font-size: 14.500px; }
.open { align-self: flex-end; width: 87px; height: 24px; line-height: 24px; padding-top: 2px; background: #151515; display: flex; align-items: center; justify-content: center; gap: 4px; margin-right: 1px; font-size: 14px; letter-spacing: -.05px; white-space: nowrap; color: #ddd; }
.ws, .ac { height: 34px; line-height: 33px; padding-left: 12px; font-weight: 700; white-space: nowrap; letter-spacing: -.2px; }
.ws { background: #42afbe; margin-top: 10px; }
.ac { background: #13c957; margin-top: 2px; letter-spacing: .1px; }

/* taskbar */
.taskbar { height: 101px; flex: none; display: flex; color: #fff; background: radial-gradient(ellipse 120px 75px at 1790px 5px, #3c2322, #1e1e1e00), #1e1e1e; }
.sys { width: 189px; flex: none; display: flex; align-items: center; padding-left: 19px; gap: 35px; }
.tasks { width: 1489px; flex: none; }
.trow { display: flex; white-space: nowrap; font-size: 14.800px; }
.r1 { height: 50px; }
.r1 > div { width: 68px; height: 50px; padding-top: 1px; margin-right: 10.100px; border-bottom: 3px solid #7fb4e0; }
.r2 { height: 49px; margin-top: 2px; }
.r2 > div { width: 72.500px; height: 49px; margin-right: 9.970px; border-bottom: 3px solid #7fb4e0; flex: none; }
.trow > div { display: flex; align-items: center; flex: none; }
.trow i { width: 36px; height: 31px; flex: none; display: flex; align-items: center; justify-content: flex-start; position: relative; }
.r1 i { padding-left: 3px; }
.r2 i { padding-left: 4px; }
.r1 svg[width="26"] { margin-left: 2px; }
.r2 > .cur { width: 82px; margin: 0 5.470px 0 -5px; padding-left: 5px; background: #4a4a4a; }
.r2 > .zoom i { padding-left: 2px; }
.trow b { position: absolute; text-align: center; letter-spacing: 0; border-radius: 50%; }
.pb { left: 17px; top: 13px; width: 19px; height: 19px; background: #5a62b8; color: #ccd0ff; font-size: 12px; line-height: 19px; }
.pr2 { left: 14px; top: 11px; width: 21px; height: 21px; background: #ee2a5c; border: 3px solid #35917f; }
.zt { left: 6px; top: 6px; font-size: 9px; line-height: 18px; }
.trow .zb { left: 14px; top: 13px; width: 19px; height: 19px; border-radius: 4px; background: #f33838; font-weight: 400; font-size: 14px; line-height: 19px; }
.trow .tb { left: 14px; top: 10px; width: 21px; height: 21px; background: #d02a20; font-weight: 400; font-size: 15px; line-height: 20px; }
.more { margin: 45px 12px 0 0; }
.tray { width: 51px; flex: none; display: flex; flex-direction: column; gap: 31px; padding-top: 15px; }
.tray div { display: flex; gap: 9px; align-items: center; }
.clock { width: 102px; flex: none; text-align: center; line-height: 30px; padding-top: 5px; font-size: 14.500px; margin-left: -1px; letter-spacing: -.3px; }
.note { width: 55px; margin-left: 10px; padding-top: 39px; position: relative; }
.note b { position: absolute; left: 8px; top: 48px; width: 24px; height: 23px; border-radius: 50%; background: #333; border: 1px solid #888; font-size: 14px; line-height: 21px; text-align: center; letter-spacing: -.5px; }
.peek { margin-left: auto; width: 6px; border-left: 1px solid #666; }
```
